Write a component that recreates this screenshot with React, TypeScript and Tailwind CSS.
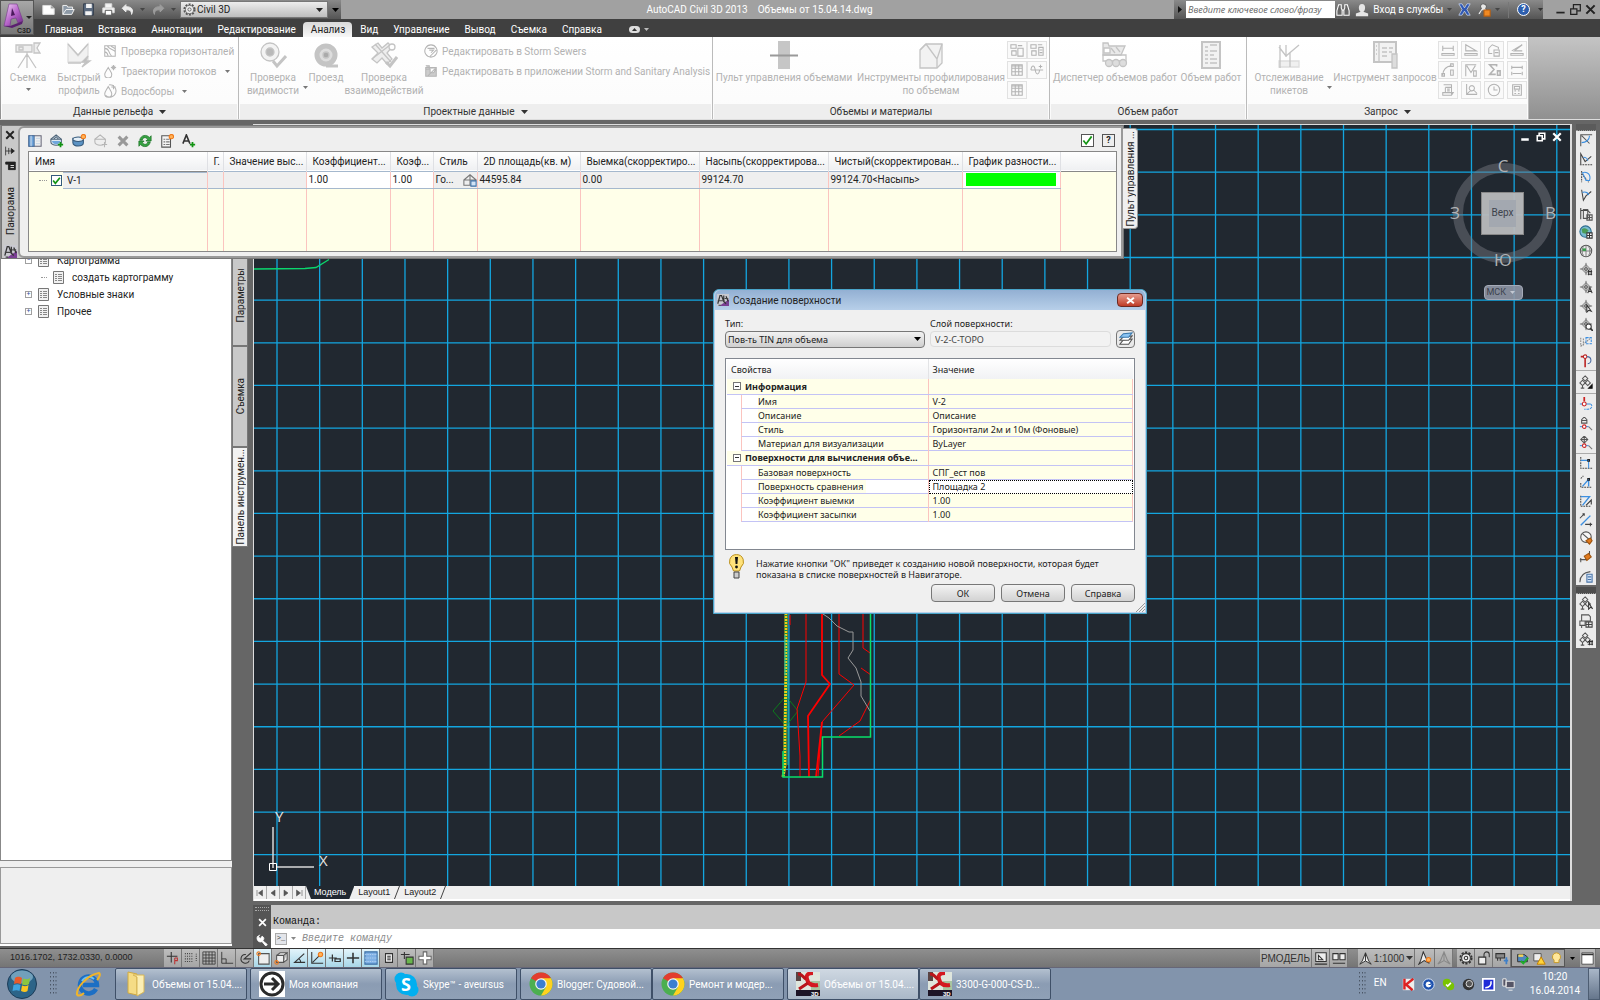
import type { ReactNode } from "react";

// ---------- small shared pieces ----------

function Glyph({ size = 14, className = "", children }: { size?: number; className?: string; children: ReactNode }) {
    return (
        <svg
            width={size}
            height={size}
            viewBox="0 0 16 16"
            fill="none"
            stroke="currentColor"
            strokeWidth="1.2"
            className={`shrink-0 ${className}`}
            aria-hidden="true"
        >
            {children}
        </svg>
    );
}

function Caret({ className = "" }: { className?: string }) {
    return (
        <svg width="7" height="4" viewBox="0 0 7 4" className={`shrink-0 ${className}`} aria-hidden="true">
            <path d="M0 0h7L3.5 4z" fill="currentColor" />
        </svg>
    );
}

function SmallCaret({ className = "" }: { className?: string }) {
    return (
        <svg width="5" height="3" viewBox="0 0 5 3" className={`shrink-0 ${className}`} aria-hidden="true">
            <path d="M0 0h5L2.5 3z" fill="currentColor" />
        </svg>
    );
}

function CivilLogo({ size = 14 }: { size?: number }) {
    return (
        <svg width={size} height={size} viewBox="0 0 16 16" className="shrink-0" aria-hidden="true">
            <rect width="16" height="16" fill="#c9c9d0" />
            <path d="M16 7v9H3z" fill="#7a3f93" />
            <path d="M1 13 4 2h2l3 8 3 3M9 2v9M12 3l3 7" fill="none" stroke="#333" strokeWidth="1.600" />
            <path d="M1 9h9M10 6h5M2 15h3" stroke="#444" strokeWidth="1.5" />
        </svg>
    );
}

// ---------- title bar ----------

const quickAccess: { label: string; art: ReactNode }[] = [
    { label: "Создать", art: <path d="M1 3h10l4 4v7H1zM11 3v4h4" fill="#fff" stroke="#ddd" /> },
    { label: "Открыть", art: <path d="M1 14V3h5l1 2h6v3M1 14l4-6h10l-3 6z" fill="#8d99a6" stroke="#f1f1f1" /> },
    {
        label: "Сохранить",
        art: (
            <>
                <path d="M2 1h12v14H2z" fill="#5c6b80" stroke="#333d4a" />
                <path d="M5 1h7v5H5zM4 10h8v5H4z" fill="#f3f3f3" stroke="none" />
            </>
        ),
    },
    {
        label: "Печать",
        art: (
            <>
                <path d="M4 1h8v5H4zM1 6h14v6H1z" fill="#f4f4f4" stroke="#ddd" />
                <path d="M4 9h8v6H4z" fill="#fff" stroke="#555" />
            </>
        ),
    },
];

function TitleBar() {
    return (
        <header className="flex h-[19px] items-stretch bg-[#a1a1a1] text-[10px] text-white">
            <div className="flex w-[341px] items-center bg-gradient-to-b from-[#8a8a8a] to-[#555] pl-[38px]">
                {quickAccess.map((q) => (
                    <button key={q.label} aria-label={q.label} className="flex w-5 justify-center">
                        <Glyph size={13}>{q.art}</Glyph>
                    </button>
                ))}
                <button aria-label="Отменить" className="flex w-[18px] justify-center text-[#ececec]">
                    <Glyph size={13}>
                        <path d="M6 2 1.5 6.5 6 11V8.500c5-.500 7 1.500 7 5.500 3-6 0-9.500-7-9.500z" fill="currentColor" />
                    </Glyph>
                </button>
                <SmallCaret className="mx-1 text-[#444]" />
                <button aria-label="Повторить" className="flex w-[18px] justify-center text-[#9d9d9d]">
                    <Glyph size={13}>
                        <path d="M10 2l4.500 4.500L10 11V8.500C5 8 3 10 3 14 0 8 3 4.500 10 4.500z" fill="currentColor" />
                    </Glyph>
                </button>
                <SmallCaret className="mx-1 text-[#444]" />
                <div className="relative h-[17px] w-[148px] border border-[#777] bg-gradient-to-b from-[#ededed] to-[#bdbdbd] text-[#222]">
                    <Glyph size={13} className="absolute top-px left-0.5 text-[#555]">
                        <circle cx="8" cy="8" r="6.500" strokeDasharray="2.500 1.600" strokeWidth="2" />
                        <circle cx="8" cy="8" r="5" fill="#eee" strokeWidth="1" />
                        <circle cx="8" cy="8" r="2" strokeWidth="1" />
                    </Glyph>
                    <select aria-label="Рабочее пространство" className="h-full w-full appearance-none bg-transparent pl-4 text-[10px] leading-none">
                        <option>Civil 3D</option>
                    </select>
                    <Caret className="absolute top-1.5 right-1" />
                </div>
                <Caret className="ml-1 text-black" />
            </div>
            <h1 className="flex flex-1 items-center justify-center gap-2.5 pl-1 text-[10px]">
                <span>AutoCAD Civil 3D 2013</span>
                <span>Объемы от 15.04.14.dwg</span>
            </h1>
            <div className="flex w-[369px] shrink-0 items-center bg-gradient-to-b from-[#8a8a8a] to-[#555]">
                <svg width="4" height="7" viewBox="0 0 4 7" className="mx-1 shrink-0" aria-hidden="true">
                    <path d="M0 0v7l4-3.500z" fill="#111" />
                </svg>
                <input
                    aria-label="Поиск"
                    placeholder="Введите ключевое слово/фразу"
                    className="h-[17px] w-[149px] shrink-0 bg-white px-0.5 font-['Open_Sans',sans-serif] text-[9px] text-black italic placeholder:text-[#666]"
                />
                <button aria-label="Найти" className="flex w-5 justify-center text-white">
                    <Glyph size={14}>
                        <path d="M3 2h3v4l1 2v6H1V9zM13 2h-3v4L9 8v6h6V9zM7 8h2" fill="#666" />
                    </Glyph>
                </button>
                <button className="ml-1 flex items-center gap-1 whitespace-nowrap">
                    <Glyph size={14}>
                        <path d="M8 1c5 0 4 8 1.500 9L15 12v3H1v-3l5.500-2C4 9 3 1 8 1z" fill="#e6e6e6" stroke="none" />
                    </Glyph>
                    Вход в службы
                    <SmallCaret className="text-[#444]" />
                </button>
                <Glyph size={13} className="ml-1.5">
                    <path d="M1 1h4l3 5 3-5h4l-4 7 4 7h-4L8 10l-3 5H1l4-7z" fill="#2f58b4" stroke="#dfe6f5" strokeWidth=".8" />
                </Glyph>
                <Glyph size={14} className="ml-1.5">
                    <path d="M8 1a3 3 0 0 1 2 5l1 3H6l-3 5-2-2 4-6a3 3 0 0 1 3-5z" fill="#e8e8e8" stroke="#666" />
                    <path d="M8 8h7v7H8z" fill="#f08a24" stroke="#b75f10" />
                </Glyph>
                <SmallCaret className="mx-1 text-[#444]" />
                <span className="mx-1 h-4 w-px bg-[#777]" />
                <button
                    aria-label="Справка"
                    className="mx-1 h-[13px] w-[13px] shrink-0 rounded-full border border-white bg-[#2e5fae] text-[9px] leading-[11px] font-bold"
                >
                    ?
                </button>
                <SmallCaret className="ml-1 text-[#333]" />
            </div>
            <div className="flex w-[57px] items-center justify-end gap-1 pr-1 text-[#222]">
                <button aria-label="Свернуть">
                    <Glyph size={11}>
                        <path d="M2 12.500h12" strokeWidth="2.500" />
                    </Glyph>
                </button>
                <button aria-label="Восстановить">
                    <Glyph size={11}>
                        <path d="M1 7h9v8H1zM5 6V1h10v9h-4" strokeWidth="1.800" />
                    </Glyph>
                </button>
                <button aria-label="Закрыть">
                    <Glyph size={11}>
                        <path d="m2 2 12 12M14 2 2 14" strokeWidth="3" />
                    </Glyph>
                </button>
            </div>
        </header>
    );
}

const tabs = ["Главная", "Вставка", "Аннотации", "Редактирование", "Анализ", "Вид", "Управление", "Вывод", "Съемка", "Справка"];

function RibbonTabs() {
    return (
        <nav className="flex h-[18px] items-end bg-[#404040] pl-[37px] text-[10px] leading-[14px] text-white">
            {tabs.map((t) => (
                <button
                    key={t}
                    className={
                        t === "Анализ"
                            ? "h-[15px] rounded-t-sm bg-gradient-to-b from-[#d9d9d9] to-[#f7f7f7] pr-[7px] pl-2 text-[#222]"
                            : "h-[15px] pr-[7px] pl-2"
                    }
                >
                    {t}
                </button>
            ))}
            <button aria-label="Вид ленты" className="ml-5 flex h-[15px] items-center gap-1">
                <span className="flex h-[7px] w-[11px] items-center justify-center rounded-sm bg-[#ddd]">
                    <SmallCaret className="rotate-180 text-[#333]" />
                </span>
                <SmallCaret className="text-[#bbb]" />
            </button>
        </nav>
    );
}

// ---------- ribbon ----------

function BigButton({ art, lines, caret, className = "" }: { art: ReactNode; lines: string[]; caret?: boolean; className?: string }) {
    return (
        <button className={`flex flex-col items-center ${className}`}>
            <svg width="28" height="28" viewBox="0 0 28 28" fill="none" stroke="#c4c4c4" strokeWidth="1.3" className="mb-0.5" aria-hidden="true">
                {art}
            </svg>
            {lines.map((l) => (
                <span key={l} className="leading-[13px] whitespace-nowrap">
                    {l}
                </span>
            ))}
            {caret && <SmallCaret className="mt-1 text-[#777]" />}
        </button>
    );
}

function RowButton({ art, text, caret }: { art: ReactNode; text: string; caret?: boolean }) {
    return (
        <button className="flex h-5 items-center gap-1 whitespace-nowrap">
            <Glyph size={14} className="text-[#b5b5b5]">
                {art}
            </Glyph>
            {text}
            {caret && <SmallCaret className="ml-1 text-[#777]" />}
        </button>
    );
}

function ToolButton({ label, children }: { label: string; children: ReactNode }) {
    return (
        <button aria-label={label} className="flex h-[18px] w-5 items-center justify-center border border-[#e2e2e2] bg-[#fafafa]">
            <Glyph size={14} className="text-[#b3b3b3]">
                {children}
            </Glyph>
        </button>
    );
}

function RibbonPanel({ title, caret, className, children }: { title: string; caret?: boolean; className: string; children: ReactNode }) {
    return (
        <section className={`flex shrink-0 flex-col border-r border-[#bbb] bg-gradient-to-b from-white to-[#fbfbfb] ${className}`}>
            <div className="flex flex-1 items-start pt-1 text-[10px] text-[#b2b2b2]">{children}</div>
            <div className="mx-px flex h-[15px] items-center justify-center gap-1.5 bg-[#eee] text-[10px] text-[#333]">
                {title}
                {caret && <Caret />}
            </div>
        </section>
    );
}

const table = <path d="M2 2h12v12H2zM2 6h12M2 10h12M6 2v12M10 2v12M2 3.500h12" />;

function Truck() {
    return (
        <>
            <path d="M2 2h5l1 3h16l-4 9H2z" fill="#e9e9e9" />
            <path d="M3 7h6v5H3z" fill="#fff" />
            <path d="M2 14h23v6H2zM10 7l4 5M15 6l4 5" />
            <circle cx="8" cy="22" r="3.500" fill="#ddd" />
            <circle cx="15" cy="22" r="3.500" fill="#ddd" />
            <circle cx="22" cy="22" r="3.500" fill="#ddd" />
        </>
    );
}

function Ribbon() {
    return (
        <div className="flex h-[83px] border-b border-[#ddd] bg-gradient-to-b from-[#c4c4c4] to-[#909090] pl-px">
            <RibbonPanel title="Данные рельефа" caret className="w-[238px]">
                <BigButton
                    className="w-[54px]"
                    caret
                    lines={["Съемка"]}
                    art={
                        <>
                            <path d="M2 4h16v7H2zM20 2h6l-3 5 3 5h-6zM13 13 4 27M13 13l9 14M13 11v16" fill="#eee" />
                            <path d="M5 6h4v3H5z" />
                        </>
                    }
                />
                <BigButton
                    className="w-12"
                    lines={["Быстрый", "профиль"]}
                    art={
                        <>
                            <path d="M3 3v18h20V3L13 15z" fill="#f1f1f1" stroke="#ddd" />
                            <path d="M3 3l10 11L23 3M3 22h13" />
                            <path d="m23 15-6 6h4l-4 5 8-6h-4z" fill="#bbb" />
                        </>
                    }
                />
                <div className="flex flex-col">
                    <RowButton text="Проверка горизонталей" art={<path d="M2 2h12v12H2zM2 5c6 0 3 4 8 9M5 2c2 5 9 4 9 7M9 2c1 2 5 2 5 4M2 9c3 0 3 2 4 5" />} />
                    <RowButton caret text="Траектории потоков" art={<path d="M6 4c-3 5-4 6-4 8a4 4 0 0 0 8 0c0-2-1-3-4-8zM12 1v6M9 4h6M10 2l4 4M14 2l-4 4" />} />
                    <RowButton caret text="Водосборы" art={<path d="M6 3c-3 5-4 6-4 8a4 4 0 0 0 8 0c0-2-1-3-4-8zM7 1a7 7 0 1 1-4 12M12 1v5M9.500 3.500h5" />} />
                </div>
            </RibbonPanel>

            <RibbonPanel title="Проектные данные" caret className="w-[474px]">
                <div className="flex items-end pl-1">
                    <BigButton
                        className="w-[60px]"
                        lines={["Проверка", "видимости"]}
                        art={
                            <>
                                <circle cx="11" cy="11" r="9" fill="#f3f3f3" />
                                <circle cx="11" cy="11" r="4" fill="#b9b9b9" />
                                <path d="m14 20 4 5 9-10" strokeWidth="3" />
                            </>
                        }
                    />
                    <SmallCaret className="mb-2 text-[#777]" />
                </div>
                <BigButton
                    className="w-[36px]"
                    lines={["Проезд"]}
                    art={
                        <>
                            <path d="M14 25h12" strokeWidth="3" />
                            <circle cx="14" cy="14" r="9" fill="#ddd" strokeWidth="5" />
                            <circle cx="14" cy="14" r="3" fill="#aaa" />
                        </>
                    }
                />
                <BigButton
                    className="w-[80px]"
                    lines={["Проверка", "взаимодействий"]}
                    art={
                        <>
                            <path d="M2 6 8 2l4 5 6-5 4 4-5 6 5 6-5 5-5-6-5 5-5-4 6-6z" fill="#eee" />
                            <path d="M5 3l16 18M2 18 20 4" />
                            <circle cx="22" cy="6" r="3" fill="#fff" />
                            <path d="m16 21 4 4 7-9" strokeWidth="3" />
                        </>
                    }
                />
                <div className="flex flex-col">
                    <RowButton text="Редактировать в Storm Sewers" art={<path d="M8 1a7 7 0 1 1-.1 0zM4 5h8M6 7h5l-3 3M7 14l7-7" />} />
                    <RowButton
                        text="Редактировать в приложении Storm and Sanitary Analysis"
                        art={<path d="M2 4h12v10H2zM2 6h5v4h4l3-5M4 14l9-9M2 2h4v4" fill="#ccc" />}
                    />
                </div>
            </RibbonPanel>

            <RibbonPanel title="Объемы и материалы" className="w-[337px]">
                <BigButton
                    className="w-[142px]"
                    lines={["Пульт управления объемами"]}
                    art={
                        <>
                            <path d="M8 0h12v28H8z" fill="#c6c6c6" stroke="none" />
                            <path d="M0 14.500h28" stroke="#999" strokeWidth="2" />
                        </>
                    }
                />
                <BigButton
                    className="w-[152px]"
                    lines={["Инструменты профилирования", "по объемам"]}
                    art={
                        <>
                            <path d="M3 9l6-6h16v19l-5 5H3z" fill="#f2f2f2" />
                            <path d="M9 3l11 15v9M20 18l5-15M3 9l6-6" />
                        </>
                    }
                />
                <div className="grid grid-cols-2 gap-y-0.5">
                    <ToolButton label="Добавить материалы">
                        <path d="M1 2h6v4H1zM2 9h5v5H2zM9 6h6v9H9zM9 3h5" />
                    </ToolButton>
                    <ToolButton label="Расчет материалов">
                        <path d="M1 2h6v4H1zM2 9h5v5H2zM10 5h5v9h-5zM11 8h3M11 11h3M9 2h5" />
                    </ToolButton>
                    <ToolButton label="Таблица объемов">{table}</ToolButton>
                    <ToolButton label="График масс">
                        <path d="M1 8h14M1 8c1-6 4-6 5 0s4 6 5 0M12 2v4M10 4h4" />
                    </ToolButton>
                    <ToolButton label="Таблица материалов">{table}</ToolButton>
                </div>
            </RibbonPanel>

            <RibbonPanel title="Объем работ" className="w-[197px]">
                <BigButton className="w-[130px]" lines={["Диспетчер объемов работ"]} art={<Truck />} />
                <BigButton
                    className="w-[62px]"
                    lines={["Объем работ"]}
                    art={
                        <>
                            <path d="M5 1h18v26H5z" fill="#f2f2f2" strokeWidth="2" />
                            <path d="M8 6h3M8 10h3M8 14h3M8 18h3M8 22h3M13 4h7M13 10h7M13 14h4M13 18h7M13 22h7" />
                        </>
                    }
                />
            </RibbonPanel>

            <RibbonPanel title="Запрос" caret className="w-[282px]">
                <div className="flex items-end pl-1">
                    <BigButton
                        className="w-[76px]"
                        lines={["Отслеживание", "пикетов"]}
                        art={
                            <>
                                <path d="M4 20h20v6H4z" fill="#f0f0f0" stroke="#ddd" />
                                <path d="M5 4v23M11 4v12M4 6l7 9L24 4M15 12v14" />
                            </>
                        }
                    />
                    <SmallCaret className="mb-2 text-[#777]" />
                </div>
                <BigButton
                    className="w-[106px]"
                    lines={["Инструмент запросов"]}
                    art={
                        <>
                            <path d="M3 1h22v20H3z" fill="#f2f2f2" strokeWidth="2" />
                            <path d="M8 2v19M11 7h5M11 11h5M11 15h5M18 7h4M18 11h3M5 5h1M5 9h1M5 13h1" />
                            <path d="M21 13h5v14h-5z" fill="#ddd" />
                        </>
                    }
                />
                <div className="grid grid-cols-4 gap-x-[3px] gap-y-0.5">
                    <ToolButton label="Расстояние">
                        <path d="M2 3v6M14 3v6M2 6h12M1 12h14v2H1z" />
                    </ToolButton>
                    <ToolButton label="Угол наклона">
                        <path d="M2 9V2l12 7zM1 12h14v2H1z" />
                    </ToolButton>
                    <ToolButton label="Площадь">
                        <path d="m2 6 4-4 7 3v2M2 6v6h4M8 8h6v7H8zM9 11h4" />
                    </ToolButton>
                    <ToolButton label="Уклон">
                        <path d="M2 9 14 2 5 9h9M1 12h14v2H1z" />
                    </ToolButton>
                    <ToolButton label="Дуга">
                        <path d="M2 14c0-6 4-10 10-11M11 1h3v3h-3zM1 12h3v3H1zM11 8h3v6h-3z" />
                    </ToolButton>
                    <ToolButton label="Сечение">
                        <path d="M2 15V2h12M3 3l5 8 5-8M11 9h3v6h-3z" />
                    </ToolButton>
                    <ToolButton label="Сумма">
                        <path d="M11 4V2H3l5 5.500L3 13h7M12 9h3v5h-3z" strokeWidth="1.800" />
                    </ToolButton>
                    <ToolButton label="Длина">
                        <path d="M2 5h12M2 3v4M14 3v4M3 12h10M2 10v4M14 10v4" />
                    </ToolButton>
                    <ToolButton label="Список">
                        <path d="M3 2h9v3H5M12 5v8M5 5v6H2v3h10l2-3H5M7 7h3M7 9h3" />
                    </ToolButton>
                    <ToolButton label="Координаты">
                        <path d="M3 1v12h12M3 13l5-5M9 3a3 3 0 1 1-.1 0M11 8l4 4" />
                    </ToolButton>
                    <ToolButton label="Время">
                        <circle cx="8" cy="8" r="6.500" />
                        <path d="M8 4v4h4" />
                    </ToolButton>
                    <ToolButton label="Калькулятор">
                        <path d="M3 2h10v12H3zM5 4h6v3H5zM5 9h2M9 9h2M5 12h2M9 12h2" />
                    </ToolButton>
                </div>
            </RibbonPanel>
        </div>
    );
}

// ---------- left tool palette ----------

function TreeDoc() {
    return (
        <svg width="11" height="13" viewBox="0 0 11 13" className="shrink-0" aria-hidden="true">
            <path d="M.5.5h10v12H.5z" fill="#f1f1f1" stroke="#777" />
            <path d="M2 3.500h2M5 3.500h4M2 5.500h2M5 5.500h4M2 7.500h2M5 7.500h4M2 9.500h2M5 9.500h4" stroke="#888" />
        </svg>
    );
}

function TreeItem({ sign, text, child }: { sign?: string; text: string; child?: boolean }) {
    return (
        <li className={`flex h-[17px] items-center gap-1.5 ${child ? "pl-10" : "pl-6"}`}>
            {child ? (
                <span className="h-px w-1.5 border-t border-dotted border-[#999]" />
            ) : (
                <button className="flex h-[7px] w-[7px] items-center justify-center border border-[#a0a0a0] text-[7px] text-[#3c5aa0]" aria-label={text}>
                    {sign}
                </button>
            )}
            <TreeDoc />
            <span className="pl-0.5">{text}</span>
        </li>
    );
}

function SideTab({ text, className }: { text: string; className: string }) {
    return (
        <button className={`flex w-full items-center justify-center border border-[#777] ${className}`}>
            <span className="rotate-180 whitespace-nowrap [writing-mode:vertical-rl]">{text}</span>
        </button>
    );
}

function ToolPalette() {
    return (
        <aside className="flex w-[248px] shrink-0 pt-[5px] pb-0.5 text-[10px] text-[#222]">
            <div className="flex w-[232px] flex-col bg-[#efefef]">
                <ul className="flex-1 border border-[#888] bg-white pt-[126px]">
                    <TreeItem sign="−" text="Картограмма" />
                    <TreeItem child text="создать картограмму" />
                    <TreeItem sign="+" text="Условные знаки" />
                    <TreeItem sign="+" text="Прочее" />
                </ul>
                <div className="mt-1.5 h-[77px] border border-[#999]" />
                <div className="h-0.5 bg-white" />
            </div>
            <div className="flex w-4 flex-col">
                <SideTab text="Параметры" className="h-[221px] bg-[#c9c9c9] pt-[119px]" />
                <SideTab text="Съемка" className="h-[101px] bg-[#c9c9c9]" />
                <SideTab text="Панель инструмен..." className="h-[100px] bg-[#f2f2f2]" />
            </div>
        </aside>
    );
}

// ---------- drawing area ----------

const STEP = 42.66;

function Model() {
    return (
        <svg className="absolute inset-0 h-full w-full" aria-hidden="true">
            <g stroke="#13a6e0" strokeWidth="1.300">
                {Array.from({ length: 60 }, (_, i) => (
                    <line key={`v${i}`} x1={23 + i * STEP} x2={23 + i * STEP} y1="0" y2="100%" />
                ))}
                {Array.from({ length: 40 }, (_, i) => (
                    <line key={`h${i}`} y1={4.5 + i * STEP} y2={4.5 + i * STEP} x1="0" x2="100%" />
                ))}
            </g>
            <g transform="translate(-254 -125)" fill="none">
                <path d="M254 269l51-.500 11-1 13-8" stroke="#0bd66e" strokeWidth="1.300" />
                <path d="M786 696l-13 15 13 15 12-15z" stroke="#0c7a1c" />
                <g stroke="#f00">
                    <path d="M806 600v82l-9 27 3 47v21M839 600v74l15 11-32 37-4 54M863 600v48l7 5M861 668l10 7M871 699l-11 22-21 15M790 615v10" />
                    <path d="M822 600v75l8 9-22 32 1 61M822 722l-6 55" strokeWidth="1.800" />
                </g>
                <path d="M823 614l6 4 8 8 12 6h4v18l-5 8 8 10 5 14v14l9 15" stroke="#999" />
                <path d="M786 600v65l-1 70v30l-2 12" stroke="#e8d21a" strokeWidth="3" />
                <path d="M786 600v65l-1 70v30l-2 12" stroke="#0a8f4a" strokeWidth="3" strokeDasharray="1 2" />
                <path d="M785 635v40M788 640v125" stroke="#1fc3a6" />
                <path d="M870.500 600v137h-48v40H783v-26" stroke="#07e06a" strokeWidth="1.500" />
            </g>
        </svg>
    );
}

function UcsIcon() {
    return (
        <svg width="66" height="64" viewBox="0 0 66 64" className="absolute bottom-3 left-3.5" fill="none" stroke="#d8d8d8" aria-hidden="true">
            <path d="M5 58V17M9 57h37" strokeWidth="1.500" />
            <path d="M1.500 53.500h7v7h-7z" stroke="#fff" />
            <g fill="#e4e4e4" stroke="none" fontFamily="'Open Sans', sans-serif" fontSize="15">
                <text x="7" y="12">Y</text>
                <text x="51" y="56">X</text>
            </g>
        </svg>
    );
}

function ViewCube() {
    return (
        <div className="absolute top-8 right-3.5 flex w-[106px] flex-col items-center">
            <div className="relative flex h-[112px] w-[106px] flex-col items-center justify-between font-['Open_Sans','Noto_Sans',sans-serif] text-[17px] leading-[18px] text-[#b0b3b6]">
                <div className="absolute inset-x-[3px] inset-y-1.5 rounded-full border-10 border-[#7a7d84]/45" />
                <span className="relative">С</span>
                <div className="relative flex w-full items-center justify-between">
                    <span>З</span>
                    <button className="flex h-[43px] w-[43px] items-center justify-center border border-[#888] bg-[#b9bbbd]/95">
                        <span className="flex h-[27px] w-[27px] items-center justify-center bg-[#a3a8b0] font-['Roboto',sans-serif] text-[10px] text-[#3d434c]">
                            Верх
                        </span>
                    </button>
                    <span>В</span>
                </div>
                <span className="relative">Ю</span>
            </div>
            <button className="mt-4 flex h-[15px] w-[39px] items-center gap-1 rounded-sm border border-[#a5abb8] bg-[#8f96a6]/90 px-0.5 text-[9px] text-[#3b414d]">
                МСК
                <SmallCaret className="text-[#c3c8d2]" />
            </button>
        </div>
    );
}

function ModelTabs() {
    return (
        <div className="flex h-[15px] items-stretch border-b-2 border-white bg-[#efefef] font-['Liberation_Sans',sans-serif] text-[9px] leading-[13px] text-[#222]">
            {["M2 2v12M13 2v12L5 8z", "M12 2v12L4 8z", "M4 2v12l8-6z", "M14 2v12M3 2v12l8-6z"].map((d, i) => (
                <button key={d} aria-label={`Лист ${i + 1}`} className="flex w-[13px] items-center justify-center border-r border-[#aaa]">
                    <Glyph size={8} className="text-[#555]">
                        <path d={d} fill="currentColor" />
                    </Glyph>
                </button>
            ))}
            <button className="bg-[#212830] px-2 text-white [clip-path:polygon(0_0,100%_0,calc(100%-5px)_100%,5px_100%)]">Модель</button>
            {["Layout1", "Layout2"].map((t) => (
                <button key={t} className="flex items-center gap-1 pl-1">
                    {t}
                    <svg width="6" height="13" viewBox="0 0 6 13" aria-hidden="true">
                        <path d="M5.500 0 .5 13" stroke="#444" />
                    </svg>
                </button>
            ))}
        </div>
    );
}

function CommandLine() {
    return (
        <div className="mt-1 flex h-[43px] font-['Liberation_Mono',monospace] text-[10px]">
            <div className="flex w-[18px] flex-col items-center justify-between bg-[#555] py-0.5 text-white">
                <span className="h-1 w-3.5 border-y border-dotted border-[#aaa]" />
                <button aria-label="Закрыть">
                    <Glyph size={9}>
                        <path d="m2 2 12 12M14 2 2 14" strokeWidth="3" />
                    </Glyph>
                </button>
                <button aria-label="Настройка">
                    <Glyph size={12}>
                        <path d="M5 1 3 4l3 2 2-3c3 1 3 4 1 6l6 5-2 2-5-6C4 12 0 8 2 3" fill="#fff" />
                    </Glyph>
                </button>
            </div>
            <div className="flex flex-1 flex-col">
                <div className="flex flex-1 items-end bg-[#c8c8c8] pl-0.5 text-[#111]">Команда:</div>
                <label className="flex h-[19px] items-center gap-1 bg-white pl-1 text-[#888]">
                    <span className="flex h-3 w-3 items-center justify-center border border-[#aaa] bg-[#e3e5ea] text-[7px] text-[#333]">&gt;_</span>
                    <SmallCaret />
                    <input aria-label="Команда" placeholder="Введите команду" className="ml-0.5 flex-1 italic placeholder:text-[#8b8b8b]" />
                </label>
            </div>
        </div>
    );
}

// ---------- right toolbars ----------

const blue = "#3d8fe0";
const target = <path d="M8 1v14M1 8h14M8 3l5 5-5 5-5-5zM6 8a2 2 0 1 0 4 0 2 2 0 1 0-4 0" stroke="#666" strokeWidth="1" />;
const compass = <path d="M7 1l3 3-3 3-3-3zM4 6l3 3-3 3-3-3zM10 6l3 3-3 3-3-3zM4 11v4M2 15h4" stroke="#555" />;

const dockGroups: { box: string; items: ReactNode[] }[] = [
    {
        box: "h-[239px]",
        items: [
            <><path d="M2 15V2h13M3 3l9 9" stroke="#555" /><path d="M12 3c0 5-4 8-9 8" stroke={blue} /></>,
            <><path d="M2 14V2l5 9 7-6" stroke="#444" /><path d="M1 14.500h14" stroke="#444" strokeDasharray="2 1" /><path d="M5 6c3 0 5 2 5 4" stroke={blue} /></>,
            <><path d="M3 1v13M3 4l8 10" stroke="#444" strokeDasharray="2 1" /><path d="M4 3c6-2 10 3 8 9H8z" stroke={blue} /></>,
            <><path d="M3 2l2 12 3-5 6-5" stroke="#444" /><path d="M4 5c4-1 6 0 7 3" stroke={blue} /></>,
            <><path d="M2 1v13M2 4h8l3 3" stroke="#444" /><path d="M5 3h5v10H5zM9 9h6v6H9zM12 9v6M9 12h6" stroke="#555" /></>,
            <><circle cx="7.500" cy="7.500" r="6.500" fill="#79bcd0" stroke="#2d6d90" /><path d="M3 5c4-3 6 0 8 1l-3 4-4-1z" fill="#4b9c58" stroke="none" /><path d="M9 9h6v6H9zM12 9v6M9 12h6" fill="#fff" stroke="#333" /></>,
            <><circle cx="8" cy="8" r="6.500" stroke="#555" /><path d="M1.500 8h13M8 1.500v13M5 3c-2 3-2 7 0 10M11 3c2 3 2 7 0 10" stroke="#777" strokeWidth="1" /><path d="M4 5h4v3H4z" fill="#3a9d4c" stroke="none" /></>,
            <>{target}<path d="M10 11h5M10 14h5M11 9v6M14 9v6" stroke="#333" /></>,
            <>{target}<path d="m10 15 2.500-6 2.500 6M11 13h3" stroke="#333" /></>,
            <>{target}<path d="M9 7v8l2-2 3 1z" fill="#fff" stroke="#333" /></>,
            <>{target}<circle cx="11" cy="11" r="3" fill="#fff" stroke="#333" /><path d="m13 13 3 3" stroke="#333" strokeWidth="2" /></>,
            <><path d="M2 3v10M5 4v9M2 13 14 3" stroke="#888" strokeDasharray="2 1" /><path d="M8 3h6v7H8z" stroke={blue} strokeDasharray="3 1" /></>,
            <><path d="M2 3h4M7 3v12" stroke="#b22" strokeWidth="1.800" /><circle cx="7" cy="3" r="2" fill="#fff" stroke="#b22" /><path d="M9 3c6 0 6 8 1 8" stroke="#4a6aa0" /></>,
        ],
    },
    { box: "h-[23px] border-t border-[#aaa]", items: [<>{compass}<path d="M15 15v-4l-4 4z" fill="#111" stroke="#111" /></>] },
    {
        box: "h-[60px] border-t border-[#aaa]",
        items: [
            <><path d="M6 0v5" stroke="#c22" strokeWidth="2" /><path d="M1 8h12" stroke={blue} /><circle cx="6" cy="8" r="2.200" fill="#fff" stroke="#c22" /><path d="M13 8c3 1 2 6-3 6H6" stroke={blue} strokeDasharray="3 1" /></>,
            <><path d="M6 0 9 3v4H3V3zM3 4h6" stroke="#555" /><path d="M1 11h10" stroke={blue} /><circle cx="6" cy="11" r="2" fill="#fff" stroke="#c22" /><path d="M11 11l4 4" stroke="#777" /></>,
            <><path d="M6 0l4 4-4 4-4-4zM6 0v8M2 4h8" stroke="#555" /><path d="M1 11h10" stroke={blue} /><circle cx="6" cy="11" r="2" fill="#fff" stroke="#c22" /><path d="M11 11l4 4" stroke="#777" /></>,
        ],
    },
    {
        box: "h-[132px] border-t border-[#aaa]",
        items: [
            <><path d="M2 1v13h13" stroke="#444" strokeDasharray="2 1" /><path d="M2 5h9v9" stroke={blue} /><path d="M10 4h2v2h-2z" stroke="#222" /></>,
            <><path d="M2 4 5 1M2 9v5h13" stroke="#444" strokeDasharray="2 1" /><path d="m4 13 7-8v8" stroke={blue} strokeWidth="1.600" /><path d="M10 4h2v2h-2z" stroke="#222" /></>,
            <><path d="M2 2v12h12" stroke="#444" strokeDasharray="2 1" /><path d="M2 3h10L4 13" stroke={blue} strokeWidth="1.600" /><path d="m8 13 6-6v5" stroke="#333" /></>,
            <><path d="m1 6 5-5M4 1h2v2M7 13h8M13 11v4" stroke="#444" /><path d="M2 14 13 3" stroke={blue} strokeWidth="1.600" /></>,
            <><circle cx="8" cy="7" r="6" fill="#f6f6f6" stroke="#555" /><path d="m4 3 8 7" stroke="#555" /><path d="m8 11 5-3 2 3-3 4z" fill="#e27a1d" stroke="#9c5410" /></>,
            <><path d="M1 11h8M2 9v5M12 1v8" stroke="#555" /><path d="m6 7 5-3 3 4-5 4z" fill="#e27a1d" stroke="#9c5410" /></>,
            <><path d="M1 15c0-7 4-11 12-12" stroke="#555" /><path d="M9 6h6v9H9z" fill="#cfe0f5" stroke="#4b76a8" /><path d="M10 9h4M10 12h4" stroke="#4b76a8" /></>,
        ],
    },
];

const dockBottom: ReactNode[] = [
    <>{compass}<path d="M11 8v7l2-2 2 1z" fill="#fff" stroke="#333" /></>,
    <><path d="M3 1h8l2 2v5H3zM1 8h6v5H1zM3 13v3" stroke="#555" /><path d="M8 9h7v6H8zM11 9v6M8 12h7" stroke="#444" /></>,
    <>{compass}<path d="M10 11h6M10 14h6M12 9v6M15 9v6" stroke="#333" /></>,
];

function Dock() {
    return (
        <aside className="flex w-7 shrink-0 flex-col pt-1 pr-1 pl-1">
            <div className="h-[7px] border-b border-dotted border-[#999] bg-[#5b5b5b]" />
            {dockGroups.map((g, i) => (
                <div key={i} className={`flex flex-col bg-[#ececec] ${g.box}`}>
                    {g.items.map((art, k) => (
                        <button key={k} aria-label={`Инструмент ${i + 1}.${k + 1}`} className="flex flex-1 items-center justify-center">
                            <Glyph size={14}>{art}</Glyph>
                        </button>
                    ))}
                </div>
            ))}
            <div className="mt-0.5 h-[7px] border-b border-dotted border-[#999] bg-[#4d4d4d]" />
            <div className="flex h-[54px] flex-col bg-[#ececec]">
                {dockBottom.map((art, k) => (
                    <button key={k} aria-label={`Точки ${k + 1}`} className="flex flex-1 items-center justify-center">
                        <Glyph size={14}>{art}</Glyph>
                    </button>
                ))}
            </div>
        </aside>
    );
}

// ---------- panorama palette ----------

const columns: { head: string; width: string; value?: ReactNode; cell: string }[] = [
    { head: "Имя", width: "w-[178px]", cell: "" },
    { head: "Г.", width: "w-4", cell: "bg-[#efefef]" },
    { head: "Значение выс...", width: "w-[83px]", cell: "bg-[#efefef]" },
    { head: "Коэффициент...", width: "w-[84px]", value: "1.00", cell: "bg-white" },
    { head: "Коэф...", width: "w-[43px]", value: "1.00", cell: "bg-white" },
    { head: "Стиль", width: "w-11", value: "Го...", cell: "bg-[#efefef]" },
    { head: "2D площадь(кв. м)", width: "w-[103px]", value: "44595.84", cell: "bg-[#efefef]" },
    { head: "Выемка(скорректиро...", width: "w-[119px]", value: "0.00", cell: "bg-[#efefef]" },
    { head: "Насыпь(скорректирова...", width: "w-[129px]", value: "99124.70", cell: "bg-[#efefef]" },
    { head: "Чистый(скорректирован...", width: "w-[134px]", value: "99124.70<Насыпь>", cell: "bg-[#efefef]" },
    { head: "График разности...", width: "w-[98px]", cell: "bg-white" },
];

const panoramaTools: { label: string; art: ReactNode }[] = [
    { label: "Столбцы", art: <><path d="M1 2h14v12H1z" fill="#eee" stroke="#667" /><path d="M1 2h6v12H1z" fill="#6fa5dc" stroke="#456d9c" /><path d="M3.500 2v12M9 5h5M9 8h5M9 11h5" stroke="#cdd9e6" /></> },
    { label: "Добавить", art: <><path d="m1 6 6-5 6 5v3c0 5-12 5-12 0z" fill="#dce8f2" stroke="#4e6478" /><path d="M2 8c2 5 8 5 10 0z" fill="#6fa5dc" stroke="none" /><path d="M1 6h12M4 6l3-3 3 3" stroke="#4e6478" /><path d="M12 9v6M9 12h6" stroke="#129312" strokeWidth="2" /></> },
    { label: "Создать", art: <><path d="M1 5h12v5c0 5-12 5-12 0z" fill="#5c93c4" stroke="#365a7c" /><ellipse cx="7" cy="6" rx="6" ry="2.500" fill="#e3eef7" stroke="#365a7c" /><circle cx="13" cy="3" r="2.500" fill="#ffb257" stroke="#f07818" /></> },
    { label: "Ограничить", art: <><path d="m1 6 6-5 6 5v3c0 5-12 5-12 0z" fill="#eee" stroke="#b5b5b5" /><path d="M1 6h12M12 9v6M9 12h6" stroke="#b5b5b5" /></> },
    { label: "Удалить", art: <path d="m3 3 10 10M13 3 3 13" stroke="#999" strokeWidth="3.500" /> },
    { label: "Пересчитать", art: <path d="M2 7c1-6 8-7 11-3l2-2v6H9l2-2c-2-3-6-2-6 1zM14 9c-1 6-8 7-11 3l-2 2V8h6l-2 2c2 3 6 2 6-1z" fill="#37a343" stroke="#156d20" strokeWidth=".8" /> },
    { label: "Отчет", art: <><path d="M2 2h10v13H2z" fill="#f4f4f4" stroke="#555" /><path d="M4 6h2M7 6h4M4 9h2M7 9h4M4 12h2M7 12h4" stroke="#777" /><circle cx="13" cy="3" r="2.500" fill="#ffb257" stroke="#f07818" /></> },
    { label: "Текст", art: <><path d="m1 11 4-10 4 10M3 8h5" stroke="#333" strokeWidth="1.800" /><path d="M12 9v6M9 12h6" stroke="#129312" strokeWidth="2" /></> },
];

function Panorama() {
    return (
        <section className="absolute top-[125px] left-px z-10 flex h-[134px] w-[1123px] border border-[#777] bg-[#c9c9c9] text-[10px] text-[#222]">
            <div className="flex w-4 flex-col items-center pt-1">
                <button aria-label="Закрыть">
                    <Glyph size={10}>
                        <path d="m2 2 12 12M14 2 2 14" strokeWidth="3" />
                    </Glyph>
                </button>
                <button aria-label="Свернуть" className="mt-1.5">
                    <Glyph size={10}>
                        <path d="M1 1v14M6 3v10M1 8h13" />
                        <path d="m10 4 5 4-5 4z" fill="#222" />
                    </Glyph>
                </button>
                <button aria-label="Свойства" className="mt-1">
                    <Glyph size={11}>
                        <path d="M1 3h14v11H5V6H1z" fill="#222" />
                        <path d="M8 8h5M8 11h5" stroke="#fff" />
                    </Glyph>
                </button>
                <span className="mt-4 mb-auto rotate-180 [writing-mode:vertical-rl]">Панорама</span>
                <CivilLogo size={13} />
            </div>
            <div className="flex flex-1 flex-col rounded-l-md border-2 border-[#999] bg-[#efefef] pr-1 pb-1 pl-2">
                <div className="flex h-[23px] items-center pt-0.5">
                    {panoramaTools.map((t) => (
                        <button key={t.label} aria-label={t.label} className="flex w-[22px] justify-start">
                            <Glyph size={14}>{t.art}</Glyph>
                        </button>
                    ))}
                    <button aria-label="Принять" className="mr-2 ml-auto flex h-[13px] w-[13px] items-center justify-center border border-[#555] bg-white">
                        <Glyph size={11} className="text-[#149414]">
                            <path d="m2 8 4 5 8-11" strokeWidth="2.500" />
                        </Glyph>
                    </button>
                    <button aria-label="Справка" className="mr-0.5 h-[13px] w-[13px] border border-[#555] bg-[#eee] text-[9px] leading-[11px] font-bold">
                        ?
                    </button>
                </div>
                <div className="flex-1 border border-[#888] bg-[#ffffe9]">
                    <table className="h-full w-full table-fixed border-collapse text-left">
                        <thead>
                            <tr className="h-[19px] border-b border-[#888] bg-gradient-to-b from-white to-[#eff0f2]">
                                {columns.map((c) => (
                                    <th key={c.head} className={`overflow-hidden border-r border-[#dfe0e4] pl-1.5 font-normal whitespace-nowrap ${c.width}`}>
                                        {c.head}
                                    </th>
                                ))}
                                <th />
                            </tr>
                        </thead>
                        <tbody>
                            <tr className="h-[17px]">
                                {columns.map((c, i) => (
                                    <td key={c.head} className={`border-r border-r-[#fbc4bf] ${c.cell} ${i ? "border-y border-y-[#a5b8cd] pl-0.5" : ""}`}>
                                        {i === 0 && (
                                            <label className="flex items-center pl-2.5">
                                                <span className="w-2 border-t border-dotted border-[#999]" />
                                                <span className="relative ml-1 flex">
                                                    <input type="checkbox" defaultChecked className="h-[11px] w-[11px] appearance-none border border-[#345a7d] bg-white" />
                                                    <Glyph size={9} className="absolute top-px left-px text-[#149414]">
                                                        <path d="m2 8 4 5 8-10" strokeWidth="3" />
                                                    </Glyph>
                                                </span>
                                                <span className="ml-px flex-1 border-y border-[#a5b8cd] bg-[#efefef] pl-1 leading-[15px]">V-1</span>
                                            </label>
                                        )}
                                        {c.head === "Стиль" ? (
                                            <span className="flex items-center justify-between whitespace-nowrap">
                                                {c.value}
                                                <Glyph size={14}>
                                                    <path d="M1 8 8 2l7 6-3 6H1zM1 8h14M8 2v12" fill="#eee" stroke="#777" />
                                                    <path d="M9 9h6v6H9z" fill="#cfe2f6" stroke="#3a6ea5" />
                                                </Glyph>
                                            </span>
                                        ) : (
                                            c.value
                                        )}
                                        {c.head.startsWith("График") && <div className="mx-px mr-1 h-[13px] bg-[#00ff00]" />}
                                    </td>
                                ))}
                                <td />
                            </tr>
                            <tr>
                                {columns.map((c) => (
                                    <td key={c.head} className="border-r border-[#fbc4bf]" />
                                ))}
                                <td />
                            </tr>
                        </tbody>
                    </table>
                </div>
            </div>
            <button className="absolute top-0.5 left-full flex h-[101px] w-[15px] items-center justify-center rounded-r-sm border border-l-0 border-[#999] bg-[#efefef]">
                <span className="rotate-180 whitespace-nowrap [writing-mode:vertical-rl]">Пульт управления ...</span>
            </button>
        </section>
    );
}

// ---------- surface dialog ----------

const properties: { name: string; value?: string; focused?: boolean }[] = [
    { name: "Информация" },
    { name: "Имя", value: "V-2" },
    { name: "Описание", value: "Описание" },
    { name: "Стиль", value: "Горизонтали 2м и 10м (Фоновые)" },
    { name: "Материал для визуализации", value: "ByLayer" },
    { name: "Поверхности для вычисления объе..." },
    { name: "Базовая поверхность", value: "СПГ_ест пов" },
    { name: "Поверхность сравнения", value: "Площадка 2", focused: true },
    { name: "Коэффициент выемки", value: "1.00" },
    { name: "Коэффициент засыпки", value: "1.00" },
];

function SurfaceDialog() {
    return (
        <div
            role="dialog"
            aria-labelledby="dialog-title"
            className="absolute top-[289px] left-[713px] z-10 w-[434px] rounded-t-md border border-[#4aa5c9] bg-[#b9d1ea] p-px pt-0 font-['Noto_Sans','Open_Sans',sans-serif] text-[9px] leading-[11px] text-[#222]"
        >
            <div className="flex h-5 items-center gap-1 rounded-t-md bg-gradient-to-b from-[#93b0d3] to-[#b7cfe9] pl-0.5">
                <CivilLogo size={12} />
                <h2 id="dialog-title" className="font-['Roboto',sans-serif] text-[10px]">
                    Создание поверхности
                </h2>
                <button
                    aria-label="Закрыть"
                    className="mr-0.5 ml-auto flex h-3.5 w-[26px] items-center justify-center rounded-sm border border-[#6d2a22] bg-gradient-to-b from-[#e59a8d] to-[#bf3b26] text-white"
                >
                    <Glyph size={9}>
                        <path d="m2 3 12 10M14 3 2 13" strokeWidth="3.500" />
                    </Glyph>
                </button>
            </div>
            <div className="relative bg-[#f0f0f0] px-2.5 pt-2 pb-2.5">
                <div className="flex">
                    <div className="w-[205px]">
                        <label htmlFor="surface-type" className="block h-[13px]">
                            Тип:
                        </label>
                        <div className="relative h-[17px] w-[200px]">
                            <select
                                id="surface-type"
                                className="h-full w-full appearance-none rounded-sm border border-[#777] bg-gradient-to-b from-[#f2f2f2] to-[#cfcfcf] pl-0.5 leading-none"
                            >
                                <option>Пов-ть TIN для объема</option>
                            </select>
                            <Caret className="absolute top-1.5 right-1 text-black" />
                        </div>
                    </div>
                    <div className="flex-1">
                        <label htmlFor="surface-layer" className="block h-[13px]">
                            Слой поверхности:
                        </label>
                        <input
                            id="surface-layer"
                            readOnly
                            value="V-2-C-TOPO"
                            className="h-4 w-[181px] rounded-sm border border-[#dcdcdc] bg-[#f2f2f2] pl-1 text-[#444]"
                        />
                    </div>
                    <button aria-label="Выбрать слой" className="flex h-[18px] w-[19px] items-center justify-center self-end rounded-sm border border-[#777] bg-[#e9e9e9]">
                        <Glyph size={14}>
                            <path d="m5 9 10-1-4 6H1z" fill="#fff" stroke="#555" />
                            <path d="m5 5.500 10-1-4 5H1z" fill="#fff" stroke="#555" />
                            <path d="m5 2 10-1-4 5H1z" fill="#8cc4f2" stroke="#3a78ad" />
                        </Glyph>
                    </button>
                </div>
                <div className="mt-2.5 h-[192px] border border-[#828790] bg-white px-px">
                    <table className="w-full table-fixed border-collapse text-left">
                        <thead>
                            <tr className="h-5 bg-gradient-to-b from-white to-[#f1f2f4]">
                                <th className="w-[201px] border-r border-[#e3e4e6] pl-1 font-normal">Свойства</th>
                                <th className="pl-1 font-normal">Значение</th>
                            </tr>
                        </thead>
                        <tbody>
                            {properties.map((p) =>
                                p.value ? (
                                    <tr key={p.name} className="h-3.5">
                                        <td className="border-r border-[#fbc4bf] pl-3.5">
                                            <div className="h-3.5 border-b border-l border-b-[#c3c3f5] border-l-[#fbc4bf] pl-4">
                                                <span className={`block leading-[13px] ${p.focused ? "w-[108px] bg-[#ffffe9]" : "bg-[#ffffe9]"}`}>{p.name}</span>
                                            </div>
                                        </td>
                                        <td className="p-0">
                                            <div
                                                className={`h-3.5 ${
                                                    p.focused
                                                        ? "border border-dotted border-black bg-white pl-[3px] leading-[11px]"
                                                        : "border-r border-b border-r-[#fbc4bf] border-b-[#c3c3f5] bg-[#ffffe9] pl-1 leading-[13px]"
                                                }`}
                                            >
                                                {p.value}
                                            </div>
                                        </td>
                                    </tr>
                                ) : (
                                    <tr key={p.name} className="h-[15px] bg-[#ffffe9]">
                                        <td className="border-r border-b border-r-[#fbc4bf] border-b-[#c3c3f5] py-0 pl-1.5">
                                            <div className="flex h-3.5 items-center gap-1 font-bold whitespace-nowrap">
                                                <button aria-label={p.name} className="flex h-2 w-2 shrink-0 items-center justify-center border border-[#777] bg-white">
                                                    <span className="h-px w-1 bg-[#333]" />
                                                </button>
                                                <span>{p.name}</span>
                                            </div>
                                        </td>
                                        <td className="border-r border-b border-r-[#fbc4bf] border-b-[#c3c3f5]" />
                                    </tr>
                                ),
                            )}
                        </tbody>
                    </table>
                </div>
                <div className="mt-1 flex h-[30px] gap-3 pl-1">
                    <svg width="15" height="26" viewBox="0 0 15 26" className="shrink-0" aria-hidden="true">
                        <path d="M7.500.6a7 7 0 0 1 4.500 12.400L10.500 17h-6L3 13A7 7 0 0 1 7.500.6z" fill="#ffe27a" stroke="#b98f1e" />
                        <path d="M5 18h5v6H5z" fill="#ccc" stroke="#444" />
                        <path d="M6 3h3l-.6 7H6.600z" fill="#111" />
                        <circle cx="7.500" cy="13" r="1.400" fill="#111" />
                    </svg>
                    <p className="pt-1">
                        Нажатие кнопки "ОК" приведет к созданию новой поверхности, которая будет
                        <br />
                        показана в списке поверхностей в Навигаторе.
                    </p>
                </div>
                <div className="flex justify-end gap-1.5">
                    {["ОК", "Отмена", "Справка"].map((b) => (
                        <button key={b} className="h-[18px] w-16 rounded-sm border border-[#777] bg-gradient-to-b from-[#f3f3f3] to-[#d2d2d2]">
                            {b}
                        </button>
                    ))}
                </div>
                <svg width="10" height="10" viewBox="0 0 10 10" className="absolute right-0 bottom-0" aria-hidden="true">
                    <path d="M1 10 10 1M4 10l6-6M7 10l3-3" stroke="#999" />
                </svg>
            </div>
        </div>
    );
}

// ---------- status bar ----------

const statusToggles: { on?: boolean; art: ReactNode }[] = [
    { art: <><path d="M1 6h12M6 1v12" /><path d="M10 8v7M10 8h3v3h-3" stroke="#b33" /></> },
    { art: <path d="M1 3h9M1 6h9M1 9h9M1 12h9M14 3v10" strokeDasharray="1 1.500" /> },
    { art: <path d="M1 1h14v14H1zM1 4.500h14M1 8h14M1 11.500h14M4.500 1v14M8 1v14M11.500 1v14" strokeWidth=".9" /> },
    { art: <path d="M2 1v13h13M2 9h5v5" strokeWidth="1" /> },
    { art: <path d="M15 2 7 9h8M9 4a5 5 0 1 0 4 7" /> },
    { on: true, art: <><path d="M3 3h12v12H3z" fill="#eee" stroke="#555" /><circle cx="3" cy="3" r="2" stroke="#f07818" /></> },
    { art: <><path d="M3 5h8v8H3zM3 5l4-3h8l-4 3M15 2v8l-4 3" fill="#eee" stroke="#555" /><circle cx="3" cy="13" r="2" stroke="#f07818" /></> },
    { on: true, art: <path d="M14 3 3 13h12M8 9a5 5 0 0 1 2 4" strokeWidth="1.300" /> },
    { on: true, art: <><path d="M2 1v13h13M3 13l8-8" /><circle cx="12" cy="4" r="2.500" fill="#ffb257" stroke="#f07818" /></> },
    { on: true, art: <path d="M1 8h9M5 4v8M8 9h6v3H8z" strokeWidth="1.400" /> },
    { on: true, art: <path d="M1 8h14M8 2v12" strokeWidth="1.800" /> },
    { on: true, art: <><path d="M1 1h14v14H1z" fill="#7fb0e4" stroke="#3a6ea5" /><path d="M1 4h14M1 8h14M1 12h14" stroke="#b9d6f5" strokeDasharray="1 1" /></> },
    { art: <path d="M4 3h8v10H4zM6 6h4M6 8h4M6 10h4" fill="#eee" /> },
    { art: <><path d="M1 4h10M5 1v8" /><path d="M7 7h8v8H7z" fill="#69b54d" /></> },
    { art: <path d="M6 1h4v5h5v4h-5v5H6v-5H1V6h5z" fill="#fff" stroke="#666" /> },
];

function StatusButton({ children, on, className = "w-[18px]" }: { children: ReactNode; on?: boolean; className?: string }) {
    return (
        <button
            className={`flex items-center justify-center border-r border-[#777] text-[#333] ${className} ${
                on ? "bg-gradient-to-b from-[#e3f4fa] to-[#a8d7e8]" : "bg-gradient-to-b from-[#bdbdbd] to-[#a5a5a5]"
            }`}
        >
            {children}
        </button>
    );
}

function StatusBar() {
    return (
        <div className="flex h-[19px] items-stretch border-t border-[#333] bg-gradient-to-b from-[#8f8f8f] to-[#757575] font-['Liberation_Sans',sans-serif] text-[10px] text-[#222]">
            <span className="flex w-[164px] items-center pl-2.5 text-[9px]">1016.1702, 1732.0330, 0.0000</span>
            {statusToggles.map((s, i) => (
                <StatusButton key={i} on={s.on}>
                    <Glyph size={14}>{s.art}</Glyph>
                </StatusButton>
            ))}
            <div className="ml-auto flex pr-1">
                <StatusButton className="w-[52px]">РМОДЕЛЬ</StatusButton>
                <StatusButton>
                    <Glyph size={14}><path d="M2 2h12v10H2zM1 15h14M5 10V5l5 5z" fill="#eee" /></Glyph>
                </StatusButton>
                <StatusButton>
                    <Glyph size={14}><path d="M1 3h6v7H1zM9 3h6v7H9zM1 14h14" fill="#eee" /></Glyph>
                </StatusButton>
                <span className="w-2.5" />
                <StatusButton className="w-[57px] gap-0.5">
                    <Glyph size={13}><path d="M8 1 4 11l-3 4 7-4 7 4-3-4zM8 1v10" fill="#eee" /></Glyph>
                    1:1000
                    <Caret />
                </StatusButton>
                <StatusButton className="w-5">
                    <Glyph size={14}><path d="M6 1 3 11l-2 4 6-4 6 3-3-4z" fill="#eee" /><circle cx="12" cy="10" r="2.500" fill="#ffb257" stroke="#f07818" /></Glyph>
                </StatusButton>
                <StatusButton>
                    <Glyph size={14} className="text-[#888]"><path d="M8 1 4 11l-3 4 7-4 7 4-3-4zM8 1v10" /></Glyph>
                </StatusButton>
                <span className="w-1" />
                <StatusButton>
                    <Glyph size={14}><circle cx="8" cy="8" r="6.500" strokeDasharray="2.500 1.600" strokeWidth="2" /><circle cx="8" cy="8" r="5" fill="#eee" /><circle cx="8" cy="8" r="2" /></Glyph>
                </StatusButton>
                <StatusButton>
                    <Glyph size={14}><path d="M2 7h8v8H2z" fill="#eee" /><path d="M8 7V4c0-4 6-4 6 0v3" /></Glyph>
                </StatusButton>
                <StatusButton>
                    <Glyph size={14}><path d="M1 3h10v5H1zM3 8v3M6 8v3" fill="#888" /><path d="M13 7v8M10 11h5" stroke="#3f7fc8" strokeWidth="2" /></Glyph>
                </StatusButton>
                <span className="flex w-[54px] items-center gap-1 border border-[#555] bg-[#a5a5a5] px-1">
                    <Glyph size={13}><path d="M2 3h8l4 3v6H2z" fill="#4f86bd" stroke="#333" /><path d="M3 3h6v3H3z" fill="#f2d35c" stroke="none" /><path d="m6 11 3 3 6-7" stroke="#1fae2a" strokeWidth="2.500" /></Glyph>
                    <Glyph size={13}><path d="M1 2h9v9H1z" fill="#eee" stroke="#555" /><path d="m10 6 5 9H5z" fill="#ffd53a" stroke="#c47f00" /></Glyph>
                    <Glyph size={13}><path d="M8 1a5 5 0 0 1 3 9v3H5v-3a5 5 0 0 1 3-9z" fill="#ffe79a" stroke="#c79a2a" /></Glyph>
                </span>
                <span className="flex w-[15px] items-center justify-center text-black">
                    <SmallCaret />
                </span>
                <StatusButton className="w-4">
                    <Glyph size={13}><path d="M1 1h14v14H1z" fill="#fff" stroke="#555" /><path d="M1 3h14" strokeWidth="2" /></Glyph>
                </StatusButton>
            </div>
        </div>
    );
}

// ---------- taskbar ----------

function Chrome() {
    return (
        <svg width="24" height="24" viewBox="0 0 24 24" className="shrink-0" aria-hidden="true">
            <circle cx="12" cy="12" r="11.500" fill="#4caf50" />
            <path d="M12 12 2 6.300A11.500 11.500 0 0 1 22 6.300z" fill="#e33b2e" />
            <path d="M12 6.300h10A11.500 11.500 0 0 1 12 23.500l5-8.500z" fill="#ffd21f" />
            <circle cx="12" cy="12" r="5.800" fill="#f6f6f6" />
            <circle cx="12" cy="12" r="4.600" fill="#3c7fd0" />
        </svg>
    );
}

function CadIcon() {
    return (
        <svg width="24" height="24" viewBox="0 0 24 24" className="shrink-0" aria-hidden="true">
            <rect width="24" height="24" fill="#dfe6dd" />
            <path d="M15 9h9v9h-9z" fill="#a7c5a0" />
            <path d="M0 0h5v9H0z" fill="#5a4444" />
            <path d="M17 1c-6 0-7 3-6 6 1 5 5 7 11 6" fill="none" stroke="#d41920" strokeWidth="4" />
            <path d="M2 2c5 0 5 4 8 5M12 11l-9 6" fill="none" stroke="#b8141b" strokeWidth="3" />
            <path d="M0 18h24v6H0z" fill="#1d1426" />
            <text x="15" y="23.500" fontSize="6" fontWeight="bold" fill="#fff" fontFamily="'Liberation Sans', sans-serif">3D</text>
        </svg>
    );
}

function Folder() {
    return (
        <svg width="24" height="26" viewBox="0 0 24 26" className="shrink-0" aria-hidden="true">
            <path d="M4 1l9 2v21l-9-2z" fill="#f5dc85" stroke="#cfa941" />
            <path d="M9 4h11v17l-7 4V6z" fill="#fbeeb4" stroke="#d7b656" />
        </svg>
    );
}

const arrowIcon = (
    <svg width="26" height="26" viewBox="0 0 26 26" className="shrink-0" aria-hidden="true">
        <rect width="26" height="26" fill="#fff" />
        <circle cx="13" cy="13" r="11" fill="none" stroke="#2a2a2a" strokeWidth="3" />
        <path d="M5 13h14M13 7l6 6-6 6" fill="none" stroke="#2a2a2a" strokeWidth="3" />
    </svg>
);

const skypeIcon = (
    <svg width="25" height="25" viewBox="0 0 25 25" className="shrink-0" aria-hidden="true">
        <circle cx="12.500" cy="12.500" r="10.500" fill="#00aff0" />
        <circle cx="7" cy="7" r="6.500" fill="#00aff0" />
        <circle cx="18" cy="18" r="6.500" fill="#00aff0" />
        <text x="7" y="19" fontSize="18" fontWeight="bold" fill="#fff" fontFamily="'Open Sans', sans-serif">S</text>
    </svg>
);

const tasks: { text: string; icon: ReactNode; active?: boolean; joined?: boolean }[] = [
    { text: "Объемы от 15.04....", icon: <Folder /> },
    { text: "Моя компания", icon: arrowIcon },
    { text: "Skype™ - aveursus", icon: skypeIcon },
    { text: "Blogger: Судовой...", icon: <Chrome /> },
    { text: "Ремонт и модер...", icon: <Chrome />, joined: true },
    { text: "Объемы от 15.04....", icon: <CadIcon />, active: true },
    { text: "3300-G-000-CS-D...", icon: <CadIcon />, joined: true },
];

function Grip() {
    return (
        <svg width="8" height="26" viewBox="0 0 8 26" className="shrink-0" aria-hidden="true">
            <path d="M1.500 1v24M4.500 1v24M7 1v24" stroke="#4b5666" strokeDasharray="1.500 2.500" />
        </svg>
    );
}

function Taskbar() {
    return (
        <footer className="flex h-[33px] items-stretch border-t border-[#667] bg-[#8294ac] text-[10px] text-white">
            <div className="flex w-[115px] shrink-0 items-center pl-[7px]">
                <button aria-label="Пуск">
                    <svg width="30" height="30" viewBox="0 0 30 30" aria-hidden="true">
                        <circle cx="15" cy="15" r="14.500" fill="#2c6488" stroke="#1d3c58" />
                        <ellipse cx="15" cy="8" rx="11" ry="6.500" fill="#8fb9d2" opacity=".7" />
                        <path d="M8 9c3-2 5-1 7 0l-1 6c-3-1-5-1-7 0z" fill="#ea5a2a" />
                        <path d="M16 9.500c3 1 5 1 7-.500l-1 6c-2 1.500-4 1.500-7 .500z" fill="#8bc53f" />
                        <path d="M6.500 16c3-1 5-1 7 0l-1 6c-2-1-4-1-7 0z" fill="#3fa4e0" />
                        <path d="M15 16.500c3 1 4 1 6.500-.500l-1 6c-2 1.500-4 1-6.500 0z" fill="#fbc520" />
                    </svg>
                </button>
                <span className="ml-3">
                    <Grip />
                </span>
                <button aria-label="Internet Explorer" className="ml-[18px]">
                    <svg width="26" height="26" viewBox="0 0 26 26" fill="none" aria-hidden="true">
                        <path d="M21 18a8.500 8.500 0 1 1 1-4H8" stroke="#1c6fc4" strokeWidth="4.500" />
                        <path d="M19 8a8 8 0 0 0-12 2" stroke="#6cc0f5" strokeWidth="2" />
                        <path d="M2 24C1 17 12 4 24 2c2 1 0 5-2 7M2 24c2 1 5 0 7-2" stroke="#f0b429" strokeWidth="2" />
                    </svg>
                </button>
            </div>
            {tasks.map((t, i) => (
                <button
                    key={i}
                    className={`flex w-[132px] shrink-0 items-center gap-1 overflow-hidden rounded-xs border border-[#3f5068] pl-2 whitespace-nowrap ${t.joined ? "" : i ? "ml-[3px]" : ""} ${
                        t.active ? "bg-gradient-to-b from-[#cfd8e2] to-[#aab8c8]" : "bg-gradient-to-b from-[#b3c0cf] via-[#8b9cb3] to-[#8fa0b6]"
                    }`}
                >
                    {t.icon}
                    {t.text}
                </button>
            ))}
            <div className="ml-auto flex items-center">
                <Grip />
                <span className="ml-2 w-7 pb-1">EN</span>
                <div className="flex w-[112px] items-center gap-[7px]">
                    <Glyph size={13}><path d="M1 1h14v14H1z" fill="#eee" stroke="none" /><path d="M3 1v13M14 1 5 8l8 7" stroke="#d22" strokeWidth="3" /></Glyph>
                    <Glyph size={13}><circle cx="8" cy="8" r="7" fill="#1b4fae" stroke="#dde6f5" /><circle cx="8" cy="8" r="3" fill="#fff" stroke="#fff" /><path d="M8 8h3V5" stroke="#1b4fae" /></Glyph>
                    <Glyph size={13}><circle cx="6" cy="6" r="5" fill="#79c300" stroke="none" /><circle cx="10" cy="10" r="5" fill="#79c300" stroke="none" /><path d="m5 8 2 2 4-4" stroke="#fff" strokeWidth="2" /></Glyph>
                    <Glyph size={13}><circle cx="8" cy="8" r="7" fill="#333" stroke="none" /><circle cx="9" cy="7" r="4" fill="#555" stroke="#ddd" /></Glyph>
                    <Glyph size={13}><path d="M1 1h14v14H1z" fill="#1e2ad8" stroke="#fff" strokeWidth="2" /><path d="M11 4c1 5-2 8-7 8" stroke="#fff" strokeWidth="2" /></Glyph>
                    <Glyph size={13}><path d="M5 4h10v8H5zM8 15h5M1 1h4v9H1z" fill="#556" stroke="#eee" /></Glyph>
                </div>
                <time className="mr-2 ml-4 flex flex-col text-center leading-[14px]">
                    <span>10:20</span>
                    <span>16.04.2014</span>
                </time>
                <button aria-label="Показать рабочий стол" className="h-full w-3 border border-[#4d5d72] bg-gradient-to-b from-[#a9b7c8] to-[#66768c]" />
            </div>
        </footer>
    );
}

export default function App() {
    return (
        <div className="relative flex min-h-screen flex-col overflow-hidden bg-[#666] font-['Roboto','Noto_Sans',sans-serif]">
            <TitleBar />
            <button
                aria-label="Меню приложения"
                className="absolute top-0 left-0 flex h-[35px] w-[34px] border border-[#555] bg-gradient-to-b from-[#a8a8a8] to-[#777]"
            >
                <svg width="32" height="33" viewBox="0 0 32 33" aria-hidden="true">
                    <defs>
                        <linearGradient id="app-a" x1="0" y1="0" x2="1" y2="1">
                            <stop offset="0" stopColor="#f3d8f7" />
                            <stop offset=".5" stopColor="#b866cb" />
                            <stop offset="1" stopColor="#6b2484" />
                        </linearGradient>
                    </defs>
                    <path d="M3 25 8 3h8l6 17-5 2-2-5-5 1-1 7z" fill="url(#app-a)" stroke="#74358a" strokeWidth=".6" />
                    <path d="M11 7l3 7-4 1z" fill="#4b1a5c" />
                    <path d="M3 25l6 0 8-3 5-2-1 3-10 4z" fill="#5b1f70" />
                    <path d="M25 15h6l-3 3z" fill="#222" />
                    <text x="16" y="32" fontSize="7" fontWeight="bold" fill="#222" fontFamily="'Liberation Sans', sans-serif">C3D</text>
                </svg>
            </button>
            <RibbonTabs />
            <Ribbon />
            <div className="flex flex-1">
                <ToolPalette />
                <div className="flex flex-1 flex-col pl-[5px]">
                    <div className="flex flex-1">
                        <div className="mt-1 flex flex-1 flex-col border-t border-r-2 border-l border-[#ddd]">
                            <main className="relative flex-1 bg-[#212830]">
                                <Model />
                                <UcsIcon />
                                <div className="absolute top-[7px] right-2 flex gap-1.5 text-white">
                                    <Glyph size={10}><path d="M2 12h12" strokeWidth="4" /></Glyph>
                                    <Glyph size={10}><path d="M2 6h8v8H2zM5 5V2h9v9h-3" strokeWidth="2.500" /></Glyph>
                                    <Glyph size={10}><path d="m2 2 12 12M14 2 2 14" strokeWidth="3.500" /></Glyph>
                                </div>
                                <ViewCube />
                            </main>
                            <ModelTabs />
                        </div>
                        <Dock />
                    </div>
                    <CommandLine />
                </div>
            </div>
            <StatusBar />
            <Taskbar />
            <Panorama />
            <SurfaceDialog />
        </div>
    );
}
